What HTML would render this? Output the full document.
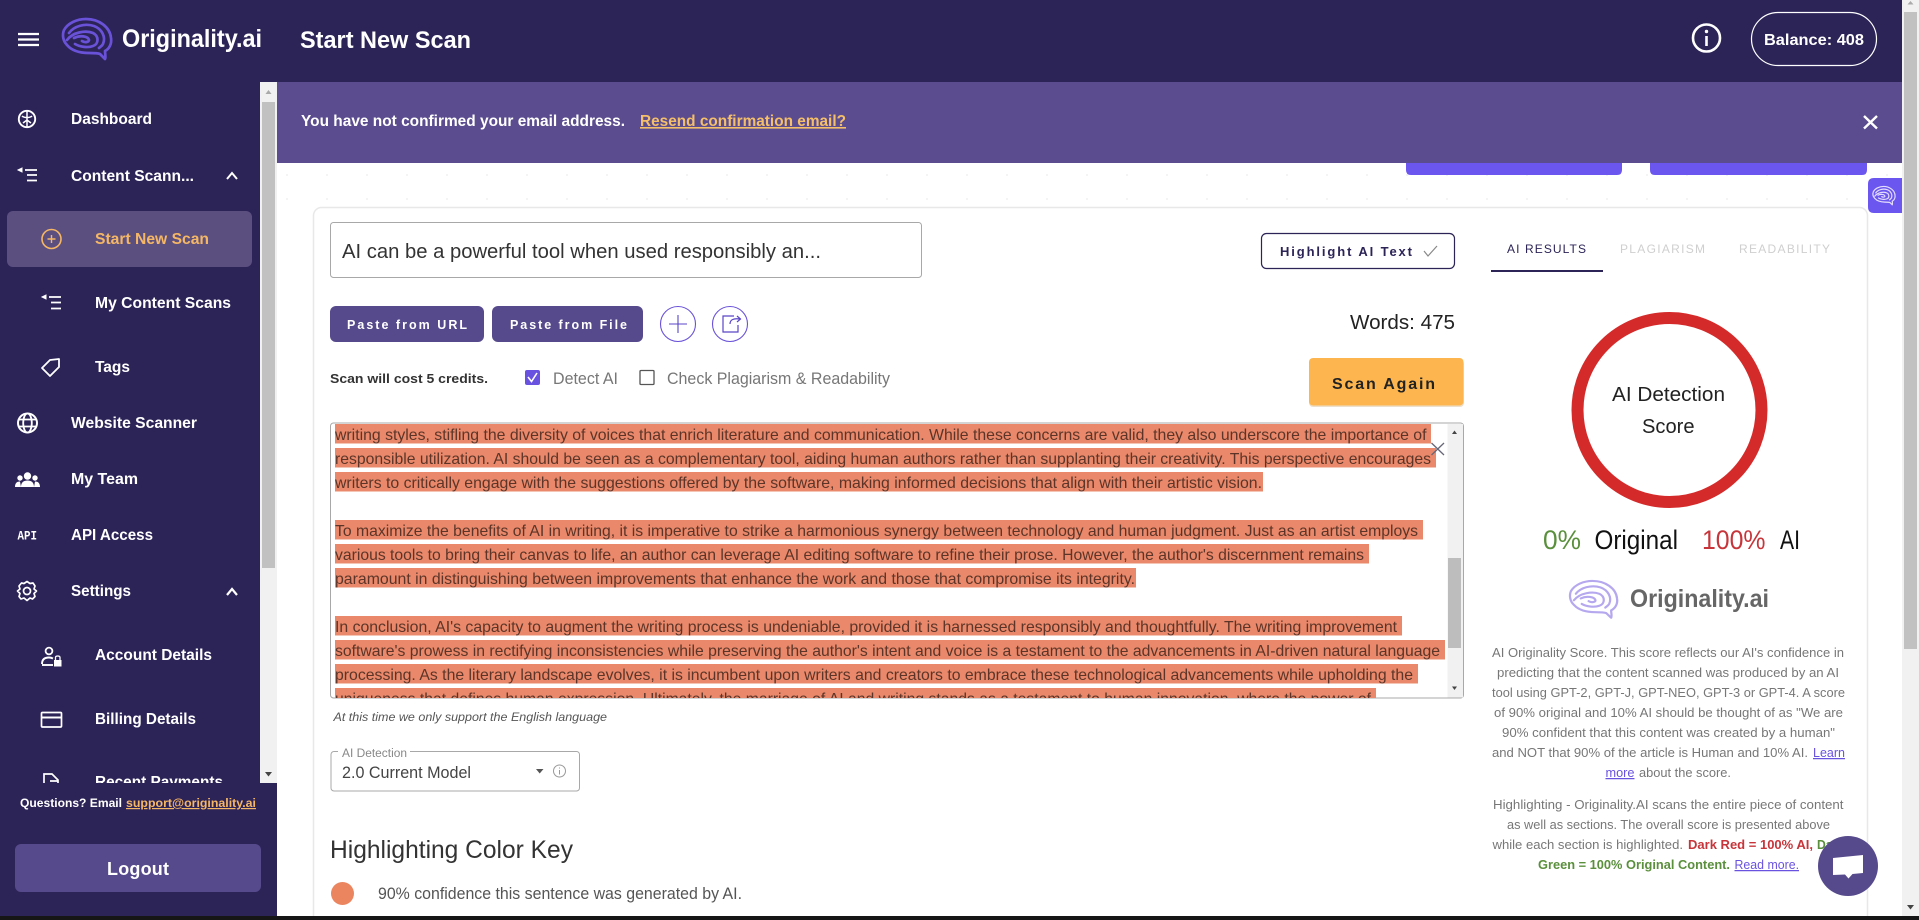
<!DOCTYPE html>
<html lang="en">
<head>
<meta charset="utf-8">
<title>Originality.ai - Start New Scan</title>
<style>
html,body{margin:0;padding:0;width:1919px;height:920px;overflow:hidden;background:#fff}
svg{display:block;position:absolute;left:0;top:0;filter:blur(.35px)}
text{font-family:"Liberation Sans",sans-serif;white-space:pre}
.nav{font-size:16px;font-weight:700;fill:#fff}
.row{font-size:16px;fill:#5c3528}
.p{font-size:12.5px;fill:#777}
.tab{font-size:12px}
.btn{font-size:12.5px;font-weight:700;fill:#fff}
.ln{fill:none;stroke:#fff;stroke-width:1.8}
.hl{fill:#e9886a}
</style>
</head>
<body>
<svg width="1919" height="920" viewBox="0 0 1919 920" xmlns="http://www.w3.org/2000/svg">
<defs>
<g id="brain" fill="none" stroke-linecap="round" stroke-linejoin="round">
<path d="M38 36C40 38 42 40 43 41C44 39 43 36 43 33C47 31 50 26 49 20C48 9 37 1 24 1C15 1 6 5 2 12C0 17 1 23 5 27C10 33 18 35 27 35C32 35 36 35 38 36Z"/>
<path d="M7 15C12 8 23 5 32 8C40 11 44 19 41 26C40 28 38 29 37 30"/>
<path d="M5 22C11 14 24 12 31 15C37 18 37 26 31 28C26 30 18 29 13 26"/>
<path d="M12 20C18 17 26 18 27 22C27 24 23 25 20 23"/>
</g>
<pattern id="dots" width="40" height="24" patternUnits="userSpaceOnUse">
<rect x="6" y="6" width="2" height="2" fill="#f4f4f4"/>
</pattern>
<clipPath id="ta"><rect x="331" y="424" width="1116" height="274"/></clipPath>
<clipPath id="side"><rect x="0" y="82" width="260" height="701"/></clipPath>
</defs>

<rect width="1919" height="920" fill="#fff"/>
<rect x="277" y="164" width="1625" height="43" fill="url(#dots)"/>

<!-- header -->
<rect width="1902" height="82" fill="#2c2357"/>
<path d="M18 34H39M18 39.500H39M18 45H39" stroke="#fff" stroke-width="2.200" fill="none"/>
<use href="#brain" transform="translate(62 18)" stroke="#6a52d8" stroke-width="2.700"/>
<text x="122" y="47" font-size="25" font-weight="700" fill="#fff" textLength="140" lengthAdjust="spacingAndGlyphs">Originality.ai</text>
<text x="300" y="48" font-size="24.500" font-weight="700" fill="#fff" textLength="171" lengthAdjust="spacingAndGlyphs">Start New Scan</text>
<circle cx="1706.500" cy="38" r="13.500" fill="none" stroke="#fff" stroke-width="2.600"/>
<path d="M1706.500 36V46" stroke="#fff" stroke-width="2.600"/>
<circle cx="1706.500" cy="31.500" r="1.700" fill="#fff"/>
<rect x="1751.500" y="12.500" width="125" height="53" rx="26.500" fill="none" stroke="#fff" stroke-width="1.200"/>
<text x="1764" y="45" font-size="16" font-weight="700" fill="#fff" textLength="100" lengthAdjust="spacingAndGlyphs">Balance: 408</text>

<!-- sidebar -->
<rect x="0" y="82" width="260" height="838" fill="#2c2357"/>
<g clip-path="url(#side)">
<circle cx="27" cy="119" r="8.200" fill="none" stroke="#fff" stroke-width="1.900"/>
<path d="M27 111V127M22 116C24 118 30 118 32 116M23 123L27 120L31 123" fill="none" stroke="#fff" stroke-width="1.500"/>
<text class="nav" x="71" y="124" textLength="81" lengthAdjust="spacingAndGlyphs">Dashboard</text>

<path d="M25 170H37M27 175H37M27 180.500H37" class="ln"/>
<path d="M18 170L22 168V172Z" fill="#fff" stroke="#fff"/>
<text class="nav" x="71" y="181" textLength="123" lengthAdjust="spacingAndGlyphs">Content Scann...</text>
<path d="M227 179L232 173L237 179" fill="none" stroke="#fff" stroke-width="2"/>

<rect x="7" y="211" width="245" height="56" rx="6" fill="#5b4f80"/>
<circle cx="51.500" cy="239" r="9.500" fill="none" stroke="#f6b765" stroke-width="1.600"/>
<path d="M47.500 239H55.500M51.500 235V243" stroke="#f6b765" stroke-width="1.400"/>
<text class="nav" x="95" y="244" style="fill:#f6b765" textLength="114" lengthAdjust="spacingAndGlyphs">Start New Scan</text>

<path d="M49 297H61M51 302.500H61M51 308.500H61" class="ln"/>
<path d="M42 297L46 295V299Z" fill="#fff" stroke="#fff"/>
<text class="nav" x="95" y="308" textLength="136" lengthAdjust="spacingAndGlyphs">My Content Scans</text>

<path d="M50 360L59 359L59 367L50 376L42 368Z" fill="none" stroke="#fff" stroke-width="1.800" stroke-linejoin="round"/>
<text class="nav" x="95" y="372" textLength="35" lengthAdjust="spacingAndGlyphs">Tags</text>

<circle cx="27.500" cy="423" r="9.500" fill="none" stroke="#fff" stroke-width="2"/>
<ellipse cx="27.500" cy="423" rx="4.300" ry="9.500" fill="none" stroke="#fff" stroke-width="1.800"/>
<path d="M18.500 419.500H36.500M18.500 426.500H36.500" stroke="#fff" stroke-width="1.800"/>
<text class="nav" x="71" y="428" textLength="126" lengthAdjust="spacingAndGlyphs">Website Scanner</text>

<circle cx="27.500" cy="476" r="3.700" fill="#fff"/><circle cx="20" cy="478" r="2.700" fill="#fff"/><circle cx="35" cy="478" r="2.700" fill="#fff"/>
<path d="M21 487C21 482 24 480.500 27.500 480.500C31 480.500 34 482 34 487ZM15 487C15 483 17 481.500 20 481.500L21 487ZM40 487C40 483 38 481.500 35 481.500L34 487Z" fill="#fff"/>
<text class="nav" x="71" y="484" textLength="67" lengthAdjust="spacingAndGlyphs">My Team</text>

<text x="17.500" y="539.500" font-size="13" font-weight="700" fill="#fff" style="font-family:'Liberation Mono',monospace" textLength="19.500" lengthAdjust="spacingAndGlyphs">API</text>
<text class="nav" x="71" y="540" textLength="82" lengthAdjust="spacingAndGlyphs">API Access</text>

<path d="M27 581.500L30 583.500L33 583L35 586L34 589L36.500 591L34 593.500L35 596.500L32.500 599L30 598L27 600.500L24 598L21 599L19 596.500L20 593.500L17.500 591L20 589L19 586L21.500 583L24 583.500Z" fill="none" stroke="#fff" stroke-width="1.700" stroke-linejoin="round"/>
<circle cx="27" cy="591" r="3.500" fill="none" stroke="#fff" stroke-width="1.700"/>
<text class="nav" x="71" y="596" textLength="60" lengthAdjust="spacingAndGlyphs">Settings</text>
<path d="M227 595L232 589L237 595" fill="none" stroke="#fff" stroke-width="2.200"/>

<circle cx="49" cy="651" r="3.400" fill="none" stroke="#fff" stroke-width="1.800"/>
<path d="M42 664C42 659 45 657.500 49 657.500C51 657.500 52 658 53 658.500" fill="none" stroke="#fff" stroke-width="1.900"/>
<path d="M42 665H53" stroke="#fff" stroke-width="1.900"/>
<rect x="54" y="660" width="7.500" height="6.500" fill="#fff"/>
<path d="M55.500 660V657.500C55.500 655.500 60 655.500 60 657.500V660" fill="none" stroke="#fff" stroke-width="1.300"/>
<text class="nav" x="95" y="660" textLength="117" lengthAdjust="spacingAndGlyphs">Account Details</text>

<rect x="41.500" y="712.500" width="20" height="14.500" rx="1" fill="none" stroke="#fff" stroke-width="1.700"/>
<path d="M41.500 717.500H61.500" stroke="#fff" stroke-width="2"/>
<text class="nav" x="95" y="724" textLength="101" lengthAdjust="spacingAndGlyphs">Billing Details</text>

<path d="M44 786V774H52L58 780V786M50 781H58" fill="none" stroke="#fff" stroke-width="1.700"/>
<text class="nav" x="95" y="787" textLength="128" lengthAdjust="spacingAndGlyphs">Recent Payments</text>
</g>

<!-- sidebar scrollbar -->
<rect x="260" y="82" width="17" height="701" fill="#f1f1f1"/>
<rect x="262" y="102" width="13" height="466" fill="#c1c1c1"/>
<path d="M265.500 94L268.500 90L271.500 94Z" fill="#aaa"/>
<path d="M265 772H272L268.500 776.500Z" fill="#444"/>

<!-- sidebar footer -->
<rect x="0" y="783" width="277" height="137" fill="#2c2357"/>
<text x="20" y="807" font-size="12" font-weight="700" fill="#fff" textLength="102" lengthAdjust="spacingAndGlyphs">Questions? Email</text>
<text x="126" y="807" font-size="12" font-weight="700" fill="#f6b765" text-decoration="underline" textLength="130" lengthAdjust="spacingAndGlyphs">support@originality.ai</text>
<rect x="15" y="844" width="246" height="48" rx="6" fill="#574a8c"/>
<text x="107" y="875" font-size="18" font-weight="700" fill="#fff" textLength="62" lengthAdjust="spacing">Logout</text>

<!-- banner -->
<rect x="277" y="82" width="1625" height="81" fill="#5a4c8e"/>
<text x="301" y="126" font-size="16" font-weight="700" fill="#fff" textLength="324" lengthAdjust="spacingAndGlyphs">You have not confirmed your email address.</text>
<text x="640" y="126" font-size="16" font-weight="700" fill="#f5bf6a" text-decoration="underline" textLength="206" lengthAdjust="spacingAndGlyphs">Resend confirmation email?</text>
<path d="M1864 116L1877 128.500M1877 116L1864 128.500" stroke="#fff" stroke-width="2.400"/>

<!-- peeking buttons & tab -->
<path d="M1406 163H1622V170Q1622 175 1617 175H1411Q1406 175 1406 170Z" fill="#6b56f0"/>
<path d="M1650 163H1867V170Q1867 175 1862 175H1655Q1650 175 1650 170Z" fill="#6b56f0"/>

<!-- card -->
<rect x="313.500" y="207.500" width="1554" height="730" rx="8" fill="#fff" stroke="#e8e8e8" stroke-width="1.500"/>
<path d="M1868 178H1902V213H1874Q1868 213 1868 207V184Q1868 178 1874 178Z" fill="#6b56f0"/>
<use href="#brain" transform="translate(1872.500 186) scale(.46)" stroke="#e4defc" stroke-width="2.600"/>

<!-- title -->
<rect x="330.500" y="222.500" width="591" height="55" rx="3" fill="#fff" stroke="#a8a8a8"/>
<text x="342" y="258" font-size="20.500" fill="#333" textLength="479" lengthAdjust="spacingAndGlyphs">AI can be a powerful tool when used responsibly an...</text>

<rect x="1261.500" y="233.500" width="193" height="35" rx="5" fill="#fff" stroke="#2c2357" stroke-width="1.200"/>
<text x="1280" y="256" font-size="13" font-weight="700" fill="#2c2357" textLength="132" lengthAdjust="spacing">Highlight AI Text</text>
<path d="M1424 251L1428 256L1437 246" fill="none" stroke="#888" stroke-width="1.200"/>

<!-- buttons -->
<rect x="330" y="306" width="154" height="36" rx="6" fill="#574a8c"/>
<text class="btn" x="347" y="329" textLength="120" lengthAdjust="spacing">Paste from URL</text>
<rect x="492" y="306" width="151" height="36" rx="6" fill="#574a8c"/>
<text class="btn" x="510" y="329" textLength="117" lengthAdjust="spacing">Paste from File</text>
<circle cx="678" cy="324" r="17.500" fill="#fff" stroke="#6a52d8" stroke-width="1.100"/>
<path d="M669 324H687M678 315V333" stroke="#5a46c8" stroke-width="1.100"/>
<circle cx="730" cy="324" r="17.500" fill="#fff" stroke="#6a52d8" stroke-width="1.100"/>
<path d="M734 316H723V332H738V325M730 324C730 320 733 318 740 319M737 316L740.500 319L737 322" fill="none" stroke="#5a46c8" stroke-width="1.200"/>
<text x="1350" y="329" font-size="20.500" fill="#222" textLength="105" lengthAdjust="spacingAndGlyphs">Words: 475</text>

<!-- options -->
<text x="330" y="383" font-size="12.500" font-weight="700" fill="#333" textLength="158" lengthAdjust="spacingAndGlyphs">Scan will cost 5 credits.</text>
<rect x="525" y="370" width="15" height="15" rx="2" fill="#6a52e0"/>
<path d="M528 377L531.500 381.500L537 373" fill="none" stroke="#fff" stroke-width="1.600"/>
<text x="553" y="384" font-size="16.500" fill="#777" textLength="65" lengthAdjust="spacingAndGlyphs">Detect AI</text>
<rect x="640" y="370.500" width="14" height="14" rx="1" fill="#fff" stroke="#555" stroke-width="1.300"/>
<text x="667" y="384" font-size="16.500" fill="#777" textLength="223" lengthAdjust="spacingAndGlyphs">Check Plagiarism &amp; Readability</text>
<rect x="1309" y="360" width="155" height="47" rx="4" fill="#c9a36a" opacity=".35"/>
<rect x="1309" y="358" width="154.500" height="47.500" rx="4" fill="#fdb64f"/>
<text x="1332" y="389" font-size="16" font-weight="700" fill="#222" textLength="103" lengthAdjust="spacing">Scan Again</text>

<!-- textarea -->
<rect x="330.500" y="423" width="1133" height="275" rx="3" fill="#fff" stroke="#a8a8a8"/>
<g clip-path="url(#ta)">
<rect class="hl" x="335" y="424" width="1096" height="19.500"/>
<rect class="hl" x="335" y="448" width="1101" height="19.500"/>
<rect class="hl" x="335" y="472" width="928" height="19.500"/>
<rect class="hl" x="335" y="520" width="1088" height="19.500"/>
<rect class="hl" x="335" y="544" width="1034" height="19.500"/>
<rect class="hl" x="335" y="568" width="801" height="19.500"/>
<rect class="hl" x="335" y="616" width="1067" height="19.500"/>
<rect class="hl" x="335" y="640" width="1110" height="19.500"/>
<rect class="hl" x="335" y="664" width="1083" height="19.500"/>
<rect class="hl" x="335" y="688" width="1041" height="19.500"/>
<text class="row" x="335" y="440" textLength="1091.500" lengthAdjust="spacingAndGlyphs">writing styles, stifling the diversity of voices that enrich literature and communication. While these concerns are valid, they also underscore the importance of</text>
<text class="row" x="335" y="464" textLength="1096" lengthAdjust="spacingAndGlyphs">responsible utilization. AI should be seen as a complementary tool, aiding human authors rather than supplanting their creativity. This perspective encourages</text>
<text class="row" x="335" y="488" textLength="927" lengthAdjust="spacingAndGlyphs">writers to critically engage with the suggestions offered by the software, making informed decisions that align with their artistic vision.</text>
<text class="row" x="335" y="536" textLength="1083" lengthAdjust="spacingAndGlyphs">To maximize the benefits of AI in writing, it is imperative to strike a harmonious synergy between technology and human judgment. Just as an artist employs</text>
<text class="row" x="335" y="560" textLength="1029" lengthAdjust="spacingAndGlyphs">various tools to bring their canvas to life, an author can leverage AI editing software to refine their prose. However, the author's discernment remains</text>
<text class="row" x="335" y="584" textLength="800" lengthAdjust="spacingAndGlyphs">paramount in distinguishing between improvements that enhance the work and those that compromise its integrity.</text>
<text class="row" x="335" y="632" textLength="1062" lengthAdjust="spacingAndGlyphs">In conclusion, AI's capacity to augment the writing process is undeniable, provided it is harnessed responsibly and thoughtfully. The writing improvement</text>
<text class="row" x="335" y="656" textLength="1105" lengthAdjust="spacingAndGlyphs">software's prowess in rectifying inconsistencies while preserving the author's intent and voice is a testament to the advancements in AI-driven natural language</text>
<text class="row" x="335" y="680" textLength="1078" lengthAdjust="spacingAndGlyphs">processing. As the literary landscape evolves, it is incumbent upon writers and creators to embrace these technological advancements while upholding the</text>
<text class="row" x="335" y="704" textLength="1036" lengthAdjust="spacingAndGlyphs">uniqueness that defines human expression. Ultimately, the marriage of AI and writing stands as a testament to human innovation, where the power of</text>
</g>
<path d="M1431.500 443L1444 455M1444 443L1431.500 455" stroke="#667" stroke-width="1.300"/>
<rect x="1447.500" y="424" width="15.500" height="273.500" fill="#f1f1f1"/>
<rect x="1448" y="558" width="13" height="90" fill="#bdbdbd"/>
<path d="M1452 434L1454.500 430.500L1457 434Z" fill="#444"/>
<path d="M1452 686.500H1457L1454.500 690Z" fill="#444"/>

<text x="333.500" y="721" font-size="11.500" font-style="italic" fill="#555" textLength="273.500" lengthAdjust="spacingAndGlyphs">At this time we only support the English language</text>

<!-- select -->
<rect x="331" y="751.500" width="248.500" height="39.500" rx="3" fill="#fff" stroke="#a8a8a8"/>
<rect x="338" y="748" width="72" height="7" fill="#fff"/>
<text x="342" y="757" font-size="11.500" fill="#888" textLength="65" lengthAdjust="spacingAndGlyphs">AI Detection</text>
<text x="342" y="778" font-size="17" fill="#444" textLength="129" lengthAdjust="spacingAndGlyphs">2.0 Current Model</text>
<path d="M536 769H543.500L539.700 773.500Z" fill="#555"/>
<circle cx="559.500" cy="771" r="6" fill="none" stroke="#999"/>
<path d="M559.500 770V774.500M559.500 767.500V768.500" stroke="#999"/>

<!-- key -->
<text x="330" y="858" font-size="25" fill="#333" textLength="243" lengthAdjust="spacingAndGlyphs">Highlighting Color Key</text>
<circle cx="342.500" cy="893.500" r="11.500" fill="#ea8560"/>
<text x="378" y="899" font-size="16.500" fill="#555" textLength="364" lengthAdjust="spacingAndGlyphs">90% confidence this sentence was generated by AI.</text>

<!-- tabs -->
<text class="tab" x="1507" y="253" fill="#2c2357" textLength="79" lengthAdjust="spacing">AI RESULTS</text>
<text class="tab" x="1620" y="253" fill="#cfcfcf" textLength="85" lengthAdjust="spacing">PLAGIARISM</text>
<text class="tab" x="1739" y="253" fill="#cfcfcf" textLength="91" lengthAdjust="spacing">READABILITY</text>
<rect x="1491" y="270" width="112" height="2" fill="#2c2357"/>

<!-- score -->
<circle cx="1669.500" cy="410" r="92" fill="none" stroke="#d42a2a" stroke-width="12"/>
<text x="1612" y="401" font-size="20" fill="#222" textLength="113" lengthAdjust="spacingAndGlyphs">AI Detection</text>
<text x="1642" y="433" font-size="20" fill="#222" textLength="52.500" lengthAdjust="spacingAndGlyphs">Score</text>
<text x="1543" y="549" font-size="27" fill="#5a8f3c" textLength="38" lengthAdjust="spacingAndGlyphs">0%</text>
<text x="1594.500" y="549" font-size="27" fill="#111" textLength="83.500" lengthAdjust="spacingAndGlyphs">Original</text>
<text x="1702" y="549" font-size="27" fill="#c7353a" textLength="63.500" lengthAdjust="spacingAndGlyphs">100%</text>
<text x="1780" y="549" font-size="27" fill="#111" textLength="20" lengthAdjust="spacingAndGlyphs">AI</text>

<use href="#brain" transform="translate(1569 580) scale(.98 .92)" stroke="#b6a8ee" stroke-width="2.300"/>
<text x="1630" y="607" font-size="25" font-weight="700" fill="#666" textLength="139" lengthAdjust="spacingAndGlyphs">Originality.ai</text>

<!-- paragraph 1 -->
<text class="p" x="1492" y="657" textLength="352" lengthAdjust="spacingAndGlyphs">AI Originality Score. This score reflects our AI's confidence in</text>
<text class="p" x="1497" y="677" textLength="342" lengthAdjust="spacingAndGlyphs">predicting that the content scanned was produced by an AI</text>
<text class="p" x="1492" y="697" textLength="353" lengthAdjust="spacingAndGlyphs">tool using GPT-2, GPT-J, GPT-NEO, GPT-3 or GPT-4. A score</text>
<text class="p" x="1494" y="717" textLength="349" lengthAdjust="spacingAndGlyphs">of 90% original and 10% AI should be thought of as "We are</text>
<text class="p" x="1502" y="737" textLength="333" lengthAdjust="spacingAndGlyphs">90% confident that this content was created by a human"</text>
<text class="p" x="1492" y="757" textLength="316" lengthAdjust="spacingAndGlyphs">and NOT that 90% of the article is Human and 10% AI.</text>
<text class="p" x="1813" y="757" style="fill:#6a52e0" text-decoration="underline" textLength="32" lengthAdjust="spacingAndGlyphs">Learn</text>
<text class="p" x="1605.500" y="777" style="fill:#6a52e0" text-decoration="underline" textLength="29" lengthAdjust="spacingAndGlyphs">more</text>
<text class="p" x="1639" y="777" textLength="92" lengthAdjust="spacingAndGlyphs">about the score.</text>

<!-- paragraph 2 -->
<text class="p" x="1493" y="809" textLength="350.500" lengthAdjust="spacingAndGlyphs">Highlighting - Originality.AI scans the entire piece of content</text>
<text class="p" x="1507" y="829" textLength="323" lengthAdjust="spacingAndGlyphs">as well as sections. The overall score is presented above</text>
<text class="p" x="1492.500" y="849" textLength="190.500" lengthAdjust="spacingAndGlyphs">while each section is highlighted.</text>
<text class="p" x="1688" y="849" style="fill:#c7353a;font-weight:700" textLength="125" lengthAdjust="spacingAndGlyphs">Dark Red = 100% AI,</text>
<text class="p" x="1817" y="849" style="fill:#5a8f3c;font-weight:700" textLength="27" lengthAdjust="spacingAndGlyphs">Dark</text>
<text class="p" x="1538" y="869" style="fill:#5a8f3c;font-weight:700" textLength="192" lengthAdjust="spacingAndGlyphs">Green = 100% Original Content.</text>
<text class="p" x="1734.500" y="869" style="fill:#6a52e0" text-decoration="underline" textLength="64.500" lengthAdjust="spacingAndGlyphs">Read more.</text>

<!-- chat -->
<circle cx="1848" cy="866" r="30" fill="#574a8c"/>
<path d="M1833 858L1863 855V873L1852.500 874L1848.500 878.500L1845 874.500L1833 875Z" fill="#fff"/>

<!-- page scrollbar -->
<rect x="1902" y="0" width="17" height="916" fill="#f1f1f1"/>
<rect x="1904" y="12" width="13" height="637" fill="#c1c1c1"/>
<path d="M1907.500 4.500L1910.500 1L1913.500 4.500Z" fill="#aaa"/>
<path d="M1907 905H1914L1910.500 909.500Z" fill="#444"/>

<!-- bottom strip -->
<rect x="0" y="916" width="1919" height="4" fill="#161616"/>
</svg>
</body>
</html>
